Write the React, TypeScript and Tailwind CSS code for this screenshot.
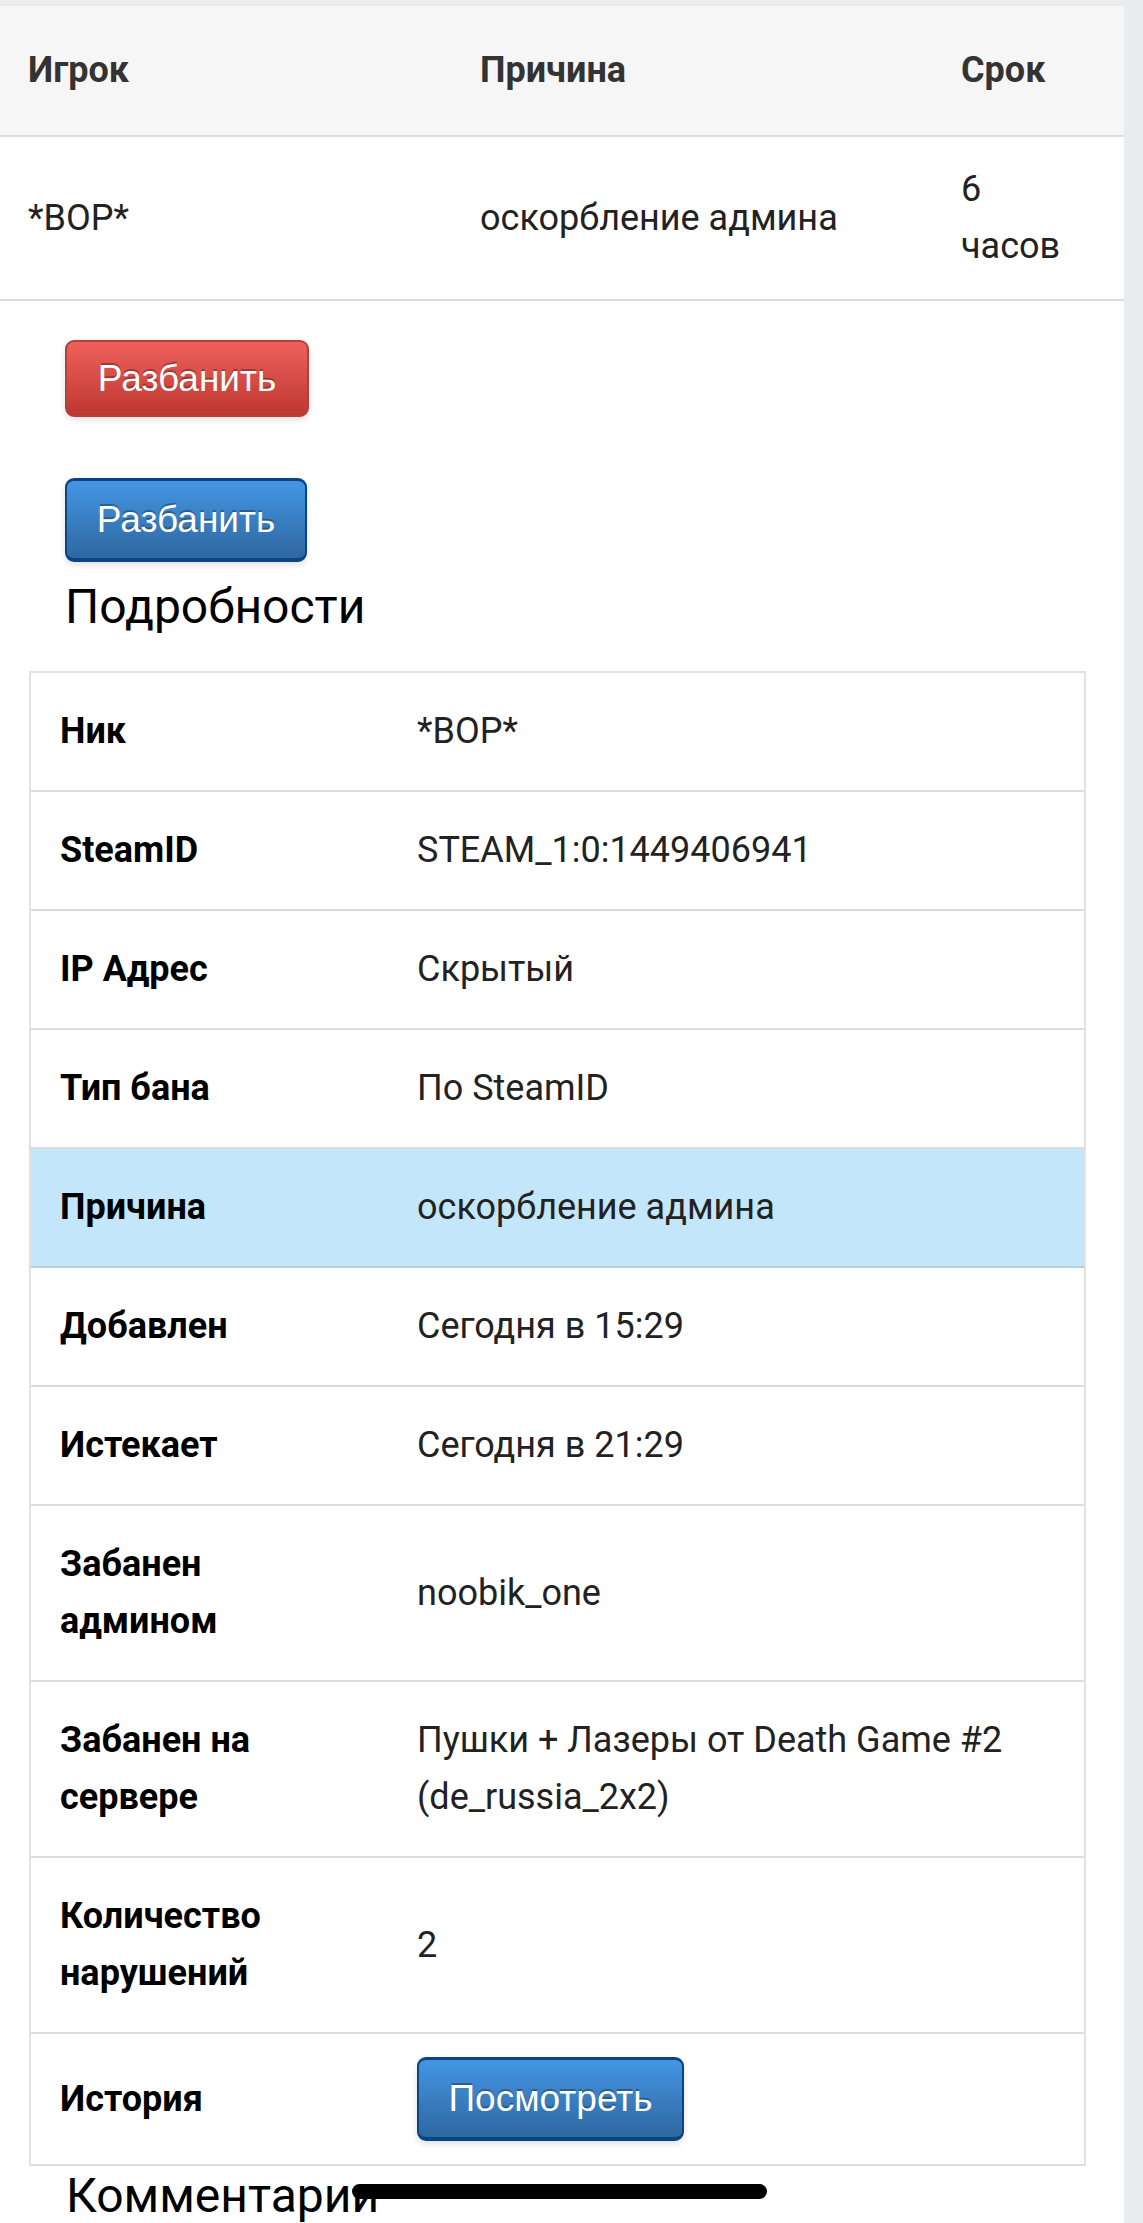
import React from 'react';

type DetailRow = {
  label: React.ReactNode;
  value: React.ReactNode;
  highlight?: boolean;
  action?: boolean;
};

const DETAILS: DetailRow[] = [
  { label: 'Ник', value: '*BOP*' },
  { label: 'SteamID', value: 'STEAM_1:0:1449406941' },
  { label: 'IP Адрес', value: 'Скрытый' },
  { label: 'Тип бана', value: 'По SteamID' },
  { label: 'Причина', value: 'оскорбление админа', highlight: true },
  { label: 'Добавлен', value: 'Сегодня в 15:29' },
  { label: 'Истекает', value: 'Сегодня в 21:29' },
  {
    label: (
      <>
        Забанен
        <br />
        админом
      </>
    ),
    value: 'noobik_one',
  },
  {
    label: (
      <>
        Забанен на
        <br />
        сервере
      </>
    ),
    value: (
      <>
        Пушки + Лазеры от Death Game #2
        <br />
        (de_russia_2x2)
      </>
    ),
  },
  {
    label: (
      <>
        Количество
        <br />
        нарушений
      </>
    ),
    value: '2',
  },
  { label: 'История', value: 'Посмотреть', action: true },
];

const btnBase =
  "inline-flex items-center justify-center rounded-[9px] font-['Liberation_Sans',Arial,sans-serif] text-[37px] text-white [text-shadow:0_-2px_0_rgba(0,0,0,0.3)] shadow-[0_3px_6px_rgba(0,0,0,0.12)]";

const redBtn = `${btnBase} h-[77px] w-[244px] border-2 border-[#b3403a] bg-[linear-gradient(to_bottom,#ee615c,#be3730)]`;
const blueBtn = `${btnBase} h-[84px] border-2 border-t-[3px] border-b-[4px] border-[#0a4482] bg-[linear-gradient(to_bottom,#4496e4,#2f67a0)]`;

export default function App() {
  return (
    <div className="relative min-h-[2223px] w-[1143px] overflow-hidden bg-[#ebecee] pt-[6px] pr-[19px] font-['Roboto',Arial,sans-serif] text-[36px] text-[#222]">
      <div className="min-h-[2217px] bg-white">
        {/* bans list */}
        <div className="grid h-[131px] grid-cols-[452px_481px_1fr] items-center border-b-2 border-[#dcdcdc] bg-[#f6f6f6] font-bold leading-[57px] text-[#333]">
          <div className="pl-[28px]">Игрок</div>
          <div className="pl-[28px]">Причина</div>
          <div className="pl-[28px]">Срок</div>
        </div>
        <div className="grid grid-cols-[452px_481px_1fr] items-center border-b-2 border-[#dcdcdc] py-[24px] leading-[57px]">
          <div className="pl-[28px]">*BOP*</div>
          <div className="pl-[28px]">оскорбление админа</div>
          <div className="w-[110px] pl-[28px]">6 часов</div>
        </div>

        <div className="flex flex-col items-start pt-[39px] pl-[65px]">
          <button type="button" className={redBtn}>
            Разбанить
          </button>
          <button type="button" className={`${blueBtn} mt-[61px] w-[242px]`}>
            Разбанить
          </button>
          <h2 className="mt-[19px] text-[48px] leading-[51px] font-normal text-black">Подробности</h2>
        </div>

        <div className="mt-[39px] ml-[29px] w-[1057px] border-x-2 border-t-2 border-[#e2e2e2]">
          {DETAILS.map((row, i) => (
            <div
              key={i}
              className={`grid grid-cols-[357px_1fr] items-center border-b-2 leading-[57px] ${
                row.highlight ? 'border-[#b9cfdd] bg-[#c4e6fb]' : 'border-[#dcdcdc]'
              } ${row.action ? 'py-[23px]' : 'py-[30px]'}`}
            >
              <div className="pl-[29px] font-bold text-black">{row.label}</div>
              <div className="pl-[29px]">
                {row.action ? (
                  <button type="button" className={`${blueBtn} w-[267px]`}>
                    {row.value}
                  </button>
                ) : (
                  row.value
                )}
              </div>
            </div>
          ))}
        </div>

        <h2 className="mt-[4px] pl-[66px] text-[48px] leading-[51px] font-normal text-black">Комментарии</h2>
      </div>

      {/* home indicator */}
      <div className="absolute top-[2184px] left-[352px] h-[15px] w-[415px] rounded-full bg-black" />
    </div>
  );
}
